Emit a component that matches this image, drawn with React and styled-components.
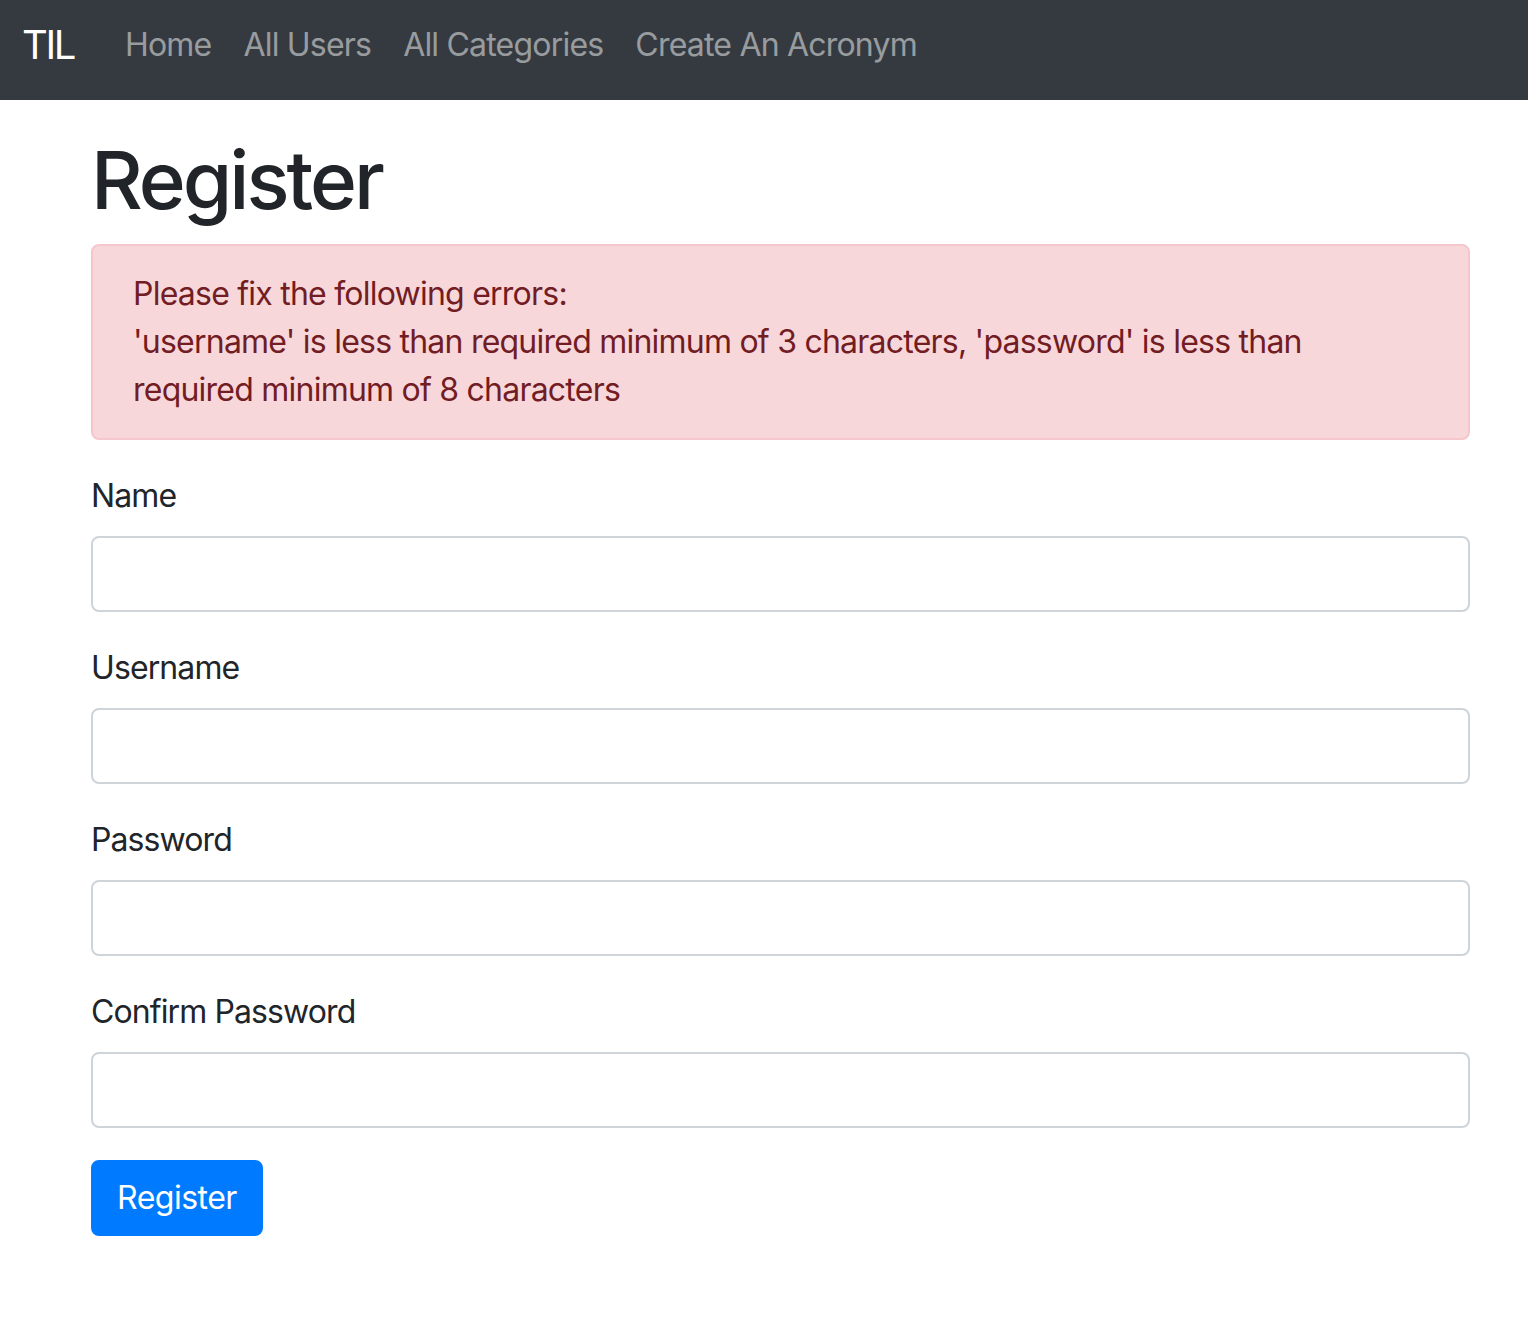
import React from "react";
import styled, { createGlobalStyle } from "styled-components";

const GlobalStyle = createGlobalStyle`
  html, body {
    margin: 0;
    padding: 0;
    background: #fff;
  }
  body {
    font-family: Inter, "Liberation Sans", sans-serif;
    color: #212529;
    font-size: 32px;
    line-height: 1.5;
  }
  * {
    box-sizing: border-box;
  }
`;

const Navbar = styled.nav`
  display: flex;
  align-items: flex-start;
  height: 100px;
  padding: 21px 22px 0;
  background-color: #343a40;
`;

const Brand = styled.a`
  font-size: 40px;
  line-height: 48px;
  color: #fff;
  text-decoration: none;
  margin-right: 35px;
  letter-spacing: -2.4px;
`;

const NavLinks = styled.div`
  display: flex;
`;

const NavLink = styled.a`
  padding: 0 16px;
  line-height: 48px;
  font-size: 32px;
  color: rgba(255, 255, 255, 0.5);
  text-decoration: none;
  letter-spacing: -0.8px;
`;

const Container = styled.main`
  padding: 32px 58px 40px 91px;
`;

const Title = styled.h1`
  margin: 0 0 16px;
  font-size: 80px;
  font-weight: 500;
  line-height: 96px;
  letter-spacing: -3px;
`;

const Alert = styled.div`
  padding: 24px 40px;
  margin-bottom: 32px;
  background-color: #f8d7da;
  border: 2px solid #f5c6cb;
  border-radius: 8px;
  color: #721c24;
  letter-spacing: -0.77px;
`;

const FormGroup = styled.div`
  margin-bottom: 32px;
`;

const Label = styled.label`
  display: block;
  margin-bottom: 16px;
  letter-spacing: -0.9px;
`;

const Input = styled.input`
  display: block;
  width: 100%;
  height: 76px;
  padding: 12px 24px;
  font-size: 32px;
  font-family: inherit;
  color: #495057;
  background: #fff;
  border: 2px solid #ced4da;
  border-radius: 8px;
  outline: none;
`;

const Button = styled.button`
  height: 76px;
  padding: 12px 24px;
  font-family: inherit;
  font-size: 32px;
  line-height: 48px;
  color: #fff;
  background-color: #007bff;
  border: 2px solid #007bff;
  border-radius: 8px;
  letter-spacing: -0.5px;
  cursor: pointer;
`;

const fields = [
  { id: "name", label: "Name", type: "text" },
  { id: "username", label: "Username", type: "text" },
  { id: "password", label: "Password", type: "password" },
  { id: "confirmPassword", label: "Confirm Password", type: "password" },
];

export default function App() {
  return (
    <>
      <GlobalStyle />
      <Navbar>
        <Brand href="#">TIL</Brand>
        <NavLinks>
          <NavLink href="#">Home</NavLink>
          <NavLink href="#">All Users</NavLink>
          <NavLink href="#">All Categories</NavLink>
          <NavLink href="#">Create An Acronym</NavLink>
        </NavLinks>
      </Navbar>
      <Container>
        <Title>Register</Title>
        <Alert>
          Please fix the following errors:
          <br />
          'username' is less than required minimum of 3 characters, 'password'
          is less than required minimum of 8 characters
        </Alert>
        <form onSubmit={(e) => e.preventDefault()}>
          {fields.map((f) => (
            <FormGroup key={f.id}>
              <Label htmlFor={f.id}>{f.label}</Label>
              <Input id={f.id} name={f.id} type={f.type} />
            </FormGroup>
          ))}
          <Button type="submit">Register</Button>
        </form>
      </Container>
    </>
  );
}
